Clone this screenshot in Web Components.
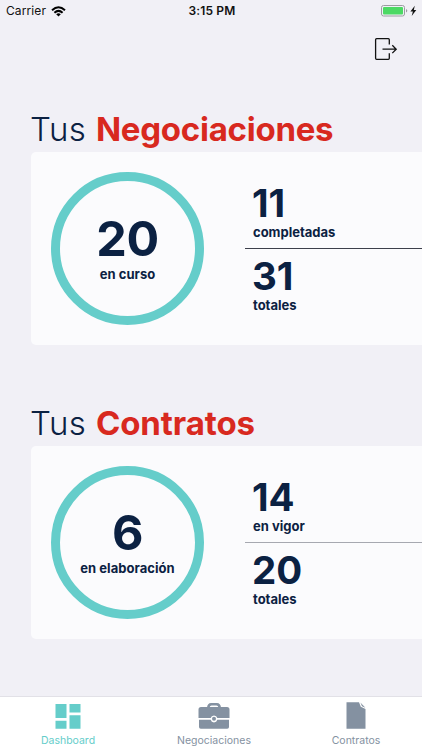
<!DOCTYPE html>
<html lang="es">
<head>
<meta charset="utf-8">
<meta name="viewport" content="width=device-width, initial-scale=1">
<title>Dashboard</title>
<style>
    :root {
        --bg: #f1f0f6;
        --card: #fbfbfd;
        --navy: #0b2142;
        --red: #d8291f;
        --teal: #65cdca;
        --grey: #8491a1;
    }
    html, body {
        margin: 0;
        height: 100%;
        overflow: hidden;
        background: var(--bg);
        color: var(--navy);
        font-family: Inter, "Noto Sans", sans-serif;
    }
</style>
</head>
<body>
<dash-app></dash-app>

<script>
class StatusBar extends HTMLElement {
    constructor() {
        super();
        this.attachShadow({ mode: "open" });
    }

    connectedCallback() {
        this.shadowRoot.innerHTML = `
            <style>
                :host {
                    display: grid;
                    grid-template-columns: 1fr auto 1fr;
                    align-items: center;
                    height: 22px;
                    padding: 0 4px 0 6px;
                    box-sizing: border-box;
                    font-size: 12px;
                    line-height: 22px;
                    color: #111;
                }
                .carrier, .power { display: flex; align-items: center; }
                .carrier { gap: 5px; letter-spacing: 0.1px; }
                .time { font-weight: 600; letter-spacing: 0.15px; }
                .power { justify-content: flex-end; }
                svg { display: block; }
            </style>
            <div class="carrier">
                <span>${this.getAttribute("carrier")}</span>
                <svg width="15" height="11" viewBox="0 0 15 11" fill="none" stroke="#000" stroke-width="2">
                    <path d="M1 4.2Q7.500-1.600 14 4.200"/>
                    <path d="M3.400 6.700Q7.500 3.100 11.600 6.700"/>
                    <path d="M7.500 10.600L5.200 8.300Q7.500 6.400 9.800 8.300Z" fill="#000" stroke="none"/>
                </svg>
            </div>
            <div class="time">${this.getAttribute("time")}</div>
            <div class="power">
                <svg width="37" height="12" viewBox="0 0 37 12">
                    <rect x=".5" y=".5" width="23" height="10.500" rx="2" fill="none" stroke="#9c9ca1"/>
                    <rect x="2" y="2" width="20" height="7.500" rx="1" fill="#4cd964"/>
                    <path d="M25 4v3.600q1.300-.5 1.300-1.800T25 4z" fill="#9c9ca1"/>
                    <path d="M33.800.8L29.400 6.600h2.500L30.700 11l4.600-5.900h-2.500z" fill="#111"/>
                </svg>
            </div>
        `;
    }
}

class StatItem extends HTMLElement {
    constructor() {
        super();
        this.attachShadow({ mode: "open" });
    }

    connectedCallback() {
        this.shadowRoot.innerHTML = `
            <style>
                :host {
                    display: flex;
                    flex-direction: column;
                    padding-left: 8px;
                    font-weight: 700;
                }
                .value {
                    margin-left: -1px;
                    font-size: 38.500px;
                    line-height: 38px;
                    letter-spacing: 0;
                }
                .label {
                    font-size: 13px;
                    line-height: 20px;
                    font-weight: 650;
                }
            </style>
            <span class="value">${this.getAttribute("value")}</span>
            <span class="label">${this.getAttribute("label")}</span>
        `;
    }
}

class StatRing extends HTMLElement {
    constructor() {
        super();
        this.attachShadow({ mode: "open" });
    }

    connectedCallback() {
        this.shadowRoot.innerHTML = `
            <style>
                :host {
                    display: flex;
                    flex-direction: column;
                    align-items: center;
                    flex: none;
                    box-sizing: border-box;
                    width: 153px;
                    height: 153px;
                    padding-top: 33px;
                    border: 9px solid var(--teal);
                    border-radius: 50%;
                    font-weight: 700;
                }
                .value {
                    font-size: 48.500px;
                    line-height: 50px;
                    letter-spacing: -0.5px;
                }
                .label {
                    font-size: 13px;
                    line-height: 20px;
                    font-weight: 650;
                    letter-spacing: 0.05px;
                }
            </style>
            <span class="value">${this.getAttribute("value")}</span>
            <span class="label">${this.getAttribute("label")}</span>
        `;
    }
}

class SummaryCard extends HTMLElement {
    constructor() {
        super();
        this.attachShadow({ mode: "open" });
    }

    connectedCallback() {
        this.shadowRoot.innerHTML = `
            <style>
                :host { display: block; }
                h2 {
                    margin: 0 0 3px -1px;
                    padding-top: 1px;
                    font-size: 33px;
                    line-height: 40px;
                    font-weight: 350;
                    letter-spacing: 0.4px;
                    white-space: nowrap;
                }
                strong {
                    font-weight: 700;
                    color: var(--red);
                    letter-spacing: var(--title-spacing, 0);
                }
                .card {
                    display: flex;
                    height: 193px;
                    box-sizing: border-box;
                    padding: 20px 0 0 20px;
                    border-radius: 5px 0 0 5px;
                    background: var(--card);
                }
                .stats {
                    flex: 1;
                    margin-left: 41px;
                    padding-top: 12px;
                }
                hr {
                    margin: 6px 0 8px;
                    border: 0;
                    height: 1px;
                    background: var(--rule, #3c3f4b);
                }
            </style>
            <h2>Tus <strong>${this.getAttribute("name")}</strong></h2>
            <div class="card">
                <slot name="ring"></slot>
                <div class="stats">
                    <slot name="top"></slot>
                    <hr>
                    <slot name="bottom"></slot>
                </div>
            </div>
        `;
    }
}

class TabItem extends HTMLElement {
    constructor() {
        super();
        this.attachShadow({ mode: "open" });
    }

    connectedCallback() {
        this.shadowRoot.innerHTML = `
            <style>
                :host {
                    display: flex;
                    flex-direction: column;
                    align-items: center;
                    padding-top: 5px;
                    color: var(--grey);
                    font-size: 10.500px;
                    line-height: 16px;
                }
                :host([active]) { color: var(--teal); }
                .icon { height: 31px; }
            </style>
            <div class="icon"><slot name="icon"></slot></div>
            <span>${this.getAttribute("label")}</span>
        `;
    }
}

class DashApp extends HTMLElement {
    constructor() {
        super();
        this.attachShadow({ mode: "open" });
    }

    connectedCallback() {
        this.shadowRoot.innerHTML = `
            <style>
                :host {
                    display: flex;
                    flex-direction: column;
                    height: 750px;
                    width: 422px;
                }
                svg { display: block; }
                header {
                    display: flex;
                    justify-content: flex-end;
                    padding: 15px 24px 0 0;
                }
                main {
                    flex: 1;
                    display: flex;
                    flex-direction: column;
                    gap: 57px;
                    padding: 47px 0 0 31px;
                }
                nav {
                    display: grid;
                    grid-template-columns: 136px 156px 128px;
                    height: 54px;
                    box-sizing: border-box;
                    border-top: 1px solid #e2e1e7;
                    background: #fff;
                }
                .deals { --title-spacing: -0.25px; }
                .contracts { --title-spacing: -0.1px; --rule: #a6a8b0; }
            </style>

            <status-bar carrier="Carrier" time="3:15 PM"></status-bar>

            <header>
                <svg width="24" height="24" viewBox="0 0 24 24" fill="none" stroke="#111" stroke-width="1.300">
                    <path d="M15.300 7.500V2.700Q15.300 1.700 14.300 1.700H2.600Q1.600 1.700 1.600 2.700V21.300Q1.600 22.300 2.600 22.300H14.300Q15.300 22.300 15.300 21.300V16.300"/>
                    <path d="M8.500 12.200H22M18.300 8.300L22.200 12.200L18.300 16.100"/>
                </svg>
            </header>

            <main>
                <summary-card class="deals" name="Negociaciones">
                    <stat-ring slot="ring" value="20" label="en curso"></stat-ring>
                    <stat-item slot="top" value="11" label="completadas"></stat-item>
                    <stat-item slot="bottom" value="31" label="totales"></stat-item>
                </summary-card>
                <summary-card class="contracts" name="Contratos">
                    <stat-ring slot="ring" value="6" label="en elaboración"></stat-ring>
                    <stat-item slot="top" value="14" label="en vigor"></stat-item>
                    <stat-item slot="bottom" value="20" label="totales"></stat-item>
                </summary-card>
            </main>

            <nav>
                <tab-item label="Dashboard" active>
                    <svg slot="icon" width="26" height="27" viewBox="0 0 26 27" fill="currentColor">
                        <path d="M.5 2h11v14H.5zM14.500 2h11v8.500h-11zM.5 18.700h11v8H.5zM14.500 13.200h11v13.500h-11z"/>
                    </svg>
                </tab-item>
                <tab-item label="Negociaciones">
                    <svg slot="icon" width="32" height="27" viewBox="0 0 32 27" fill="currentColor">
                        <path d="M9 5.500Q9.500 1 13 1h6q3.500 0 4 4.500h-2.500Q20 3.400 18.500 3.400h-5Q12 3.400 11.500 5.500z"/>
                        <path d="M3 5h26q2.500 0 2.500 2.500V16H19.300a3.400 3.400 0 0 0-6.600 0H.5V7.500Q.5 5 3 5z"/>
                        <path d="M1 17.800h11.700a3.400 3.400 0 0 0 6.600 0H31V25q0 1.800-1.800 1.800H2.800Q1 26.800 1 25z"/>
                        <circle cx="16" cy="16.800" r="2"/>
                    </svg>
                </tab-item>
                <tab-item label="Contratos">
                    <svg slot="icon" width="20" height="27" viewBox="0 0 20 27" fill="currentColor">
                        <path d="M.5.300H13L14.800 4.800L19.500 7V26.800H.5z"/>
                        <path d="M14.400.600L19.400 5.700L16 4.200z"/>
                    </svg>
                </tab-item>
            </nav>
        `;
    }
}

customElements.define("status-bar", StatusBar);
customElements.define("stat-item", StatItem);
customElements.define("stat-ring", StatRing);
customElements.define("summary-card", SummaryCard);
customElements.define("tab-item", TabItem);
customElements.define("dash-app", DashApp);
</script>
</body>
</html>
